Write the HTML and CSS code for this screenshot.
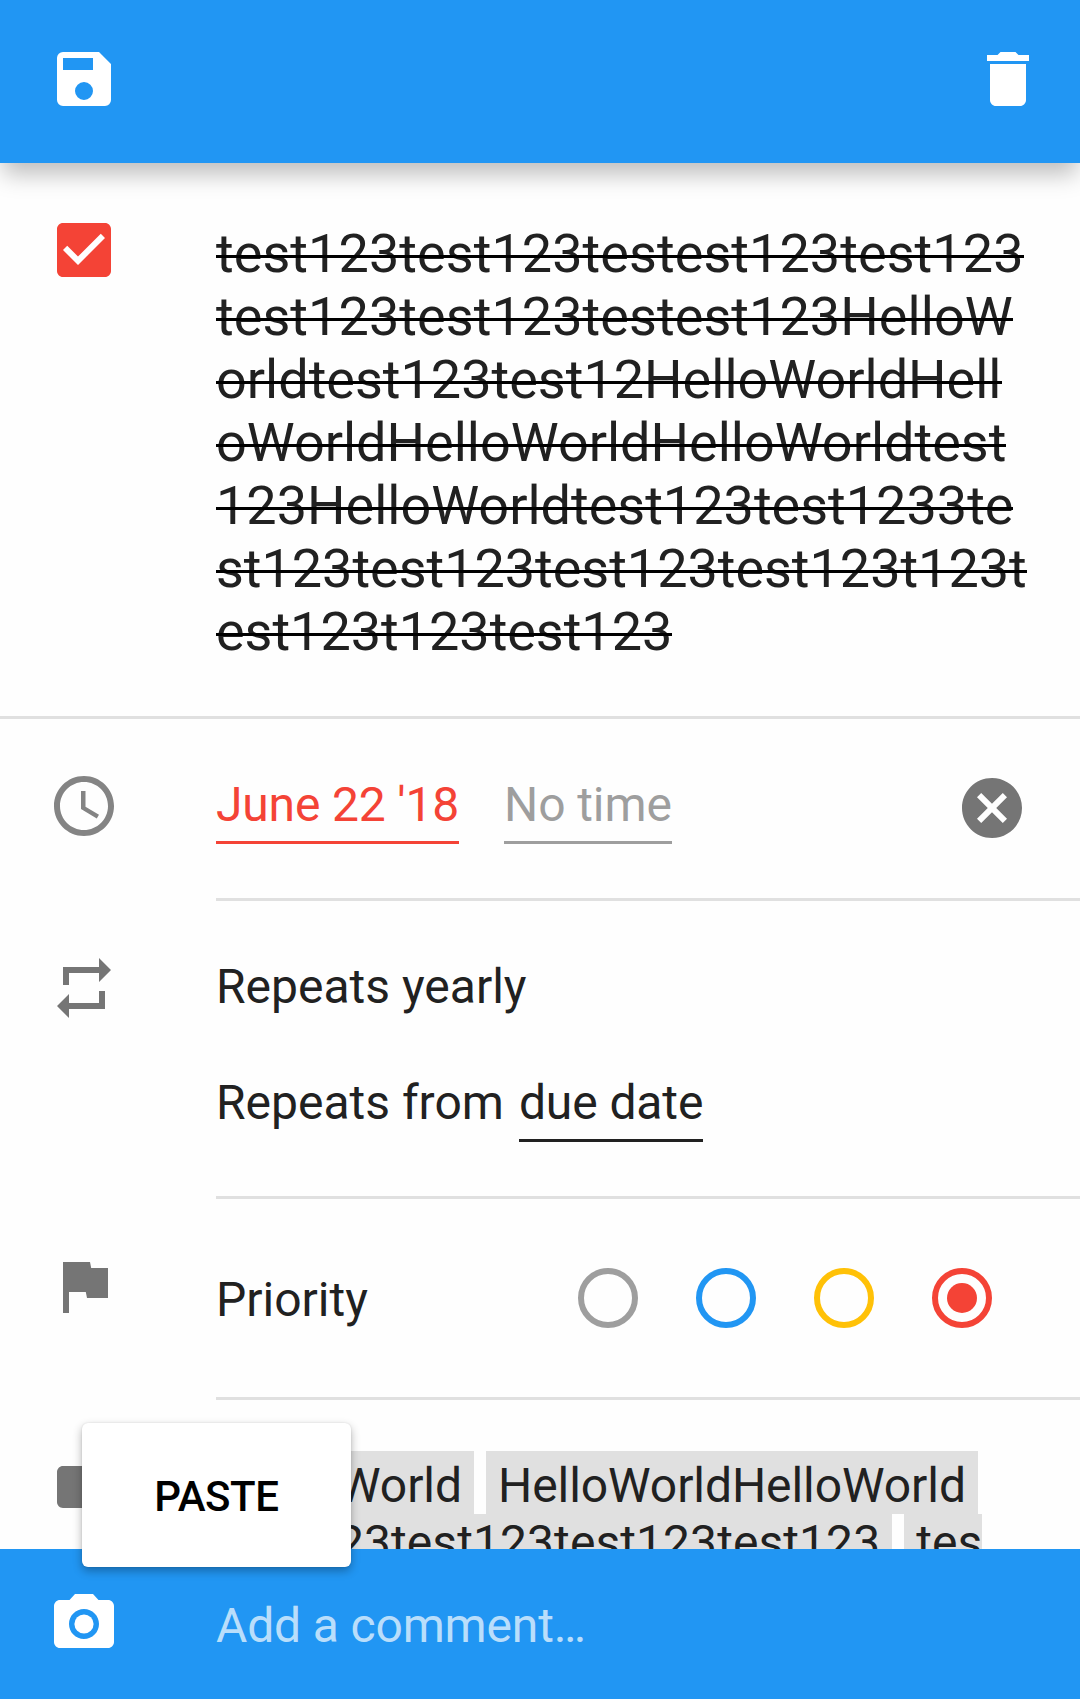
FILE: index.html
```html
<!DOCTYPE html>
<html lang="en">
<head>
<meta charset="utf-8">
<title>Edit task</title>
<link rel="stylesheet" href="styles.css">
</head>
<body>
<div class="screen">
  <header class="toolbar">
    <svg class="icon" viewBox="0 0 24 24"><path fill-rule="evenodd" d="M17 3H5a2 2 0 0 0-2 2v14a2 2 0 0 0 2 2h14a2 2 0 0 0 2-2V7zM12 19a3 3 0 1 1 0-6 3 3 0 0 1 0 6zM15 9H5V5h10z"/></svg>
    <svg class="icon" viewBox="0 0 24 24"><path d="M6 19c0 1.100.9 2 2 2h8c1.100 0 2-.9 2-2V7H6zM19 4h-3.500l-1-1h-5l-1 1H5v2h14z"/></svg>
  </header>

  <main class="content">
    <section class="row title-row">
      <svg class="icon checkbox" viewBox="0 0 24 24"><path d="M19 3H5c-1.110 0-2 .9-2 2v14c0 1.100.89 2 2 2h14c1.110 0 2-.9 2-2V5c0-1.100-.89-2-2-2zm-9 14l-5-5 1.410-1.410L10 14.170l7.590-7.590L19 8z"/></svg>
      <div class="title">
        <s class="loose">test123test123testest123test123</s>
        <s class="loose">test123test123testest123HelloW</s>
        <s>orldtest123test12HelloWorldHell</s>
        <s>oWorldHelloWorldHelloWorldtest</s>
        <s>123HelloWorldtest123test1233te</s>
        <s class="tight">st123test123test123test123t123t</s>
        <s class="tight">est123t123test123</s>
      </div>
    </section>

    <section class="row date-row">
      <svg class="icon clock" viewBox="0 0 24 24"><path d="M11.990 2C6.470 2 2 6.480 2 12s4.470 10 9.990 10C17.520 22 22 17.520 22 12S17.520 2 11.990 2zM12 20c-4.420 0-8-3.580-8-8s3.580-8 8-8 8 3.580 8 8-3.580 8-8 8zM12.500 7H11v6l5.250 3.150.75-1.230-4.500-2.670z"/></svg>
      <div class="cell">
        <span class="field field-date">June 22 '18</span>
        <span class="field field-time">No time</span>
        <svg class="icon clear" viewBox="0 0 24 24"><path d="M12 2C6.470 2 2 6.470 2 12s4.470 10 10 10 10-4.470 10-10S17.530 2 12 2zm5 13.590L15.590 17 12 13.410 8.410 17 7 15.590 10.590 12 7 8.410 8.410 7 12 10.590 15.590 7 17 8.410 13.410 12z"/></svg>
      </div>
    </section>

    <section class="row repeat-row">
      <svg class="icon" viewBox="0 0 24 24"><path d="M7 7h10v3l4-4-4-4v3H5v6h2zM17 17H7v-3l-4 4 4 4v-3h12v-6h-2z"/></svg>
      <div class="cell">
        <span class="text">Repeats yearly</span>
        <div class="from"><span class="text">Repeats from</span><span class="field field-from">due date</span></div>
      </div>
    </section>

    <section class="row priority-row">
      <svg class="icon" viewBox="0 0 24 24"><path d="M14.400 6L14 4H5v17h2v-7h5.600l.4 2h7V6z"/></svg>
      <div class="cell">
        <span class="text">Priority</span>
        <div class="radios">
          <span class="radio none"></span>
          <span class="radio low"></span>
          <span class="radio medium"></span>
          <span class="radio high selected"></span>
        </div>
      </div>
    </section>

    <section class="row label-row">
      <svg class="icon" viewBox="0 0 24 24"><path d="M17.630 5.840C17.270 5.330 16.670 5 16 5L5 5.010C3.900 5.010 3 5.900 3 7v10c0 1.100.9 1.990 2 1.990L16 19c.67 0 1.270-.33 1.630-.84L22 12z"/></svg>
      <div class="labels">
        <div class="line"><span class="tag">HelloWorld</span><span class="tag">HelloWorldHelloWorld</span></div>
        <div class="line"><span class="tag">test123test123test123test123</span><span class="tag open">tes</span></div>
      </div>
    </section>
  </main>

  <footer class="comment-bar">
    <svg class="icon" viewBox="0 0 24 24"><circle cx="12" cy="12" r="3.200"/><path d="M9 2L7.170 4H4c-1.100 0-2 .9-2 2v12c0 1.100.9 2 2 2h16c1.100 0 2-.9 2-2V6c0-1.100-.9-2-2-2h-3.170L15 2zm3 15c-2.760 0-5-2.240-5-5s2.240-5 5-5 5 2.240 5 5-2.240 5-5 5z"/></svg>
    <span class="placeholder">Add a comment…</span>
  </footer>

  <div class="paste-menu">PASTE</div>
</div>
</body>
</html>
```

FILE: styles.css
```css
* {
  box-sizing: border-box;
}

body {
  margin: 0;
  font-family: Roboto, sans-serif;
  font-size: 48px;
  line-height: 57px;
  color: #212121;
  background: #fefefe;
}

.screen {
  position: relative;
  display: flex;
  flex-direction: column;
  width: 1080px;
  height: 1699px;
  overflow: hidden;
}

.icon {
  display: block;
  flex: none;
  width: 72px;
  height: 72px;
  fill: #757575;
}

.toolbar {
  position: relative;
  z-index: 1;
  display: flex;
  flex: none;
  justify-content: space-between;
  height: 163px;
  padding: 43px 36px 0 48px;
  background: #2196f3;
  box-shadow: 0 14px 22px -3px rgba(0, 0, 0, 0.26);
}

.toolbar .icon,
.comment-bar .icon {
  fill: #fff;
}

.content {
  flex: 1;
  min-height: 0;
  overflow: hidden;
}

.row {
  display: flex;
  align-items: flex-start;
  gap: 96px;
  padding-left: 48px;
}

.cell {
  flex: 1;
  height: 100%;
  border-bottom: 3px solid #e0e0e0;
}

.title-row {
  height: 556px;
  padding-top: 51px;
  border-bottom: 3px solid #e0e0e0;
}

.checkbox {
  fill: #f44336;
}

.title {
  display: flex;
  flex-direction: column;
  align-items: flex-start;
  margin-top: 8px;
  font-size: 54px;
  line-height: 63px;
}

.title s {
  position: relative;
  text-decoration: none;
}

/* Strike bar painted over each line of the completed title */
.title s::after {
  content: "";
  position: absolute;
  top: 33px;
  left: 0;
  right: 0;
  height: 3px;
  background: #000;
}

.loose {
  letter-spacing: 0.06px;
}

.tight {
  letter-spacing: -0.03px;
}

.field {
  padding-bottom: 8px;
  border-bottom: 3px solid currentColor;
}

.date-row {
  height: 182px;
}

.clock {
  margin-top: 51px;
  fill: #848484;
}

.date-row .cell {
  display: flex;
  align-items: flex-start;
  gap: 45px;
  padding: 57px 52px 0 0;
}

.field-date {
  color: #f44336;
  letter-spacing: -0.18px;
}

.field-time {
  color: #9e9e9e;
  letter-spacing: -0.1px;
}

.field-from {
  letter-spacing: -0.1px;
}

.clear {
  margin: -4px 0 0 auto;
}

.repeat-row {
  height: 298px;
}

.repeat-row > .icon {
  margin-top: 51px;
}

.repeat-row .cell {
  display: flex;
  flex-direction: column;
  gap: 59px;
  padding-top: 57px;
}

.from {
  display: flex;
  gap: 15px;
}

.priority-row {
  height: 201px;
}

.priority-row > .icon {
  margin-top: 51px;
}

.priority-row .cell {
  display: flex;
  align-items: flex-start;
  justify-content: space-between;
  padding: 72px 88px 0 0;
}

.radios {
  display: flex;
  gap: 58px;
  margin-top: -3px;
}

.radio {
  width: 60px;
  height: 60px;
  border: 6px solid;
  border-radius: 50%;
}

.radio.none {
  color: #9e9e9e;
}

.radio.low {
  color: #2196f3;
}

.radio.medium {
  color: #ffc107;
}

.radio.high {
  color: #f44336;
}

.radio.selected {
  padding: 9px;
  background: currentColor content-box;
}

.label-row {
  padding-top: 51px;
}

.line {
  display: flex;
  gap: 12px;
  letter-spacing: 0.07px;
}

.tag {
  padding: 0 12px;
  background: #e0e0e0;
}

.tag.open {
  padding-right: 0;
}

.line:first-child {
  letter-spacing: -0.07px;
}

.line:first-child .tag {
  padding-top: 6px;
}

.comment-bar {
  display: flex;
  flex: none;
  align-items: flex-start;
  gap: 96px;
  height: 150px;
  padding: 39px 48px 0;
  background: #2196f3;
}

.placeholder {
  margin-top: 9px;
  color: rgba(255, 255, 255, 0.7);
  letter-spacing: -0.15px;
}

.paste-menu {
  position: absolute;
  left: 82px;
  top: 1423px;
  z-index: 2;
  width: 269px;
  height: 144px;
  border-radius: 6px;
  background: #fff;
  box-shadow: 0 4px 10px rgba(0, 0, 0, 0.3), 0 0 2px rgba(0, 0, 0, 0.12);
  color: #000;
  font-size: 42px;
  font-weight: 500;
  line-height: 147px;
  letter-spacing: -0.4px;
  text-align: center;
}
```
